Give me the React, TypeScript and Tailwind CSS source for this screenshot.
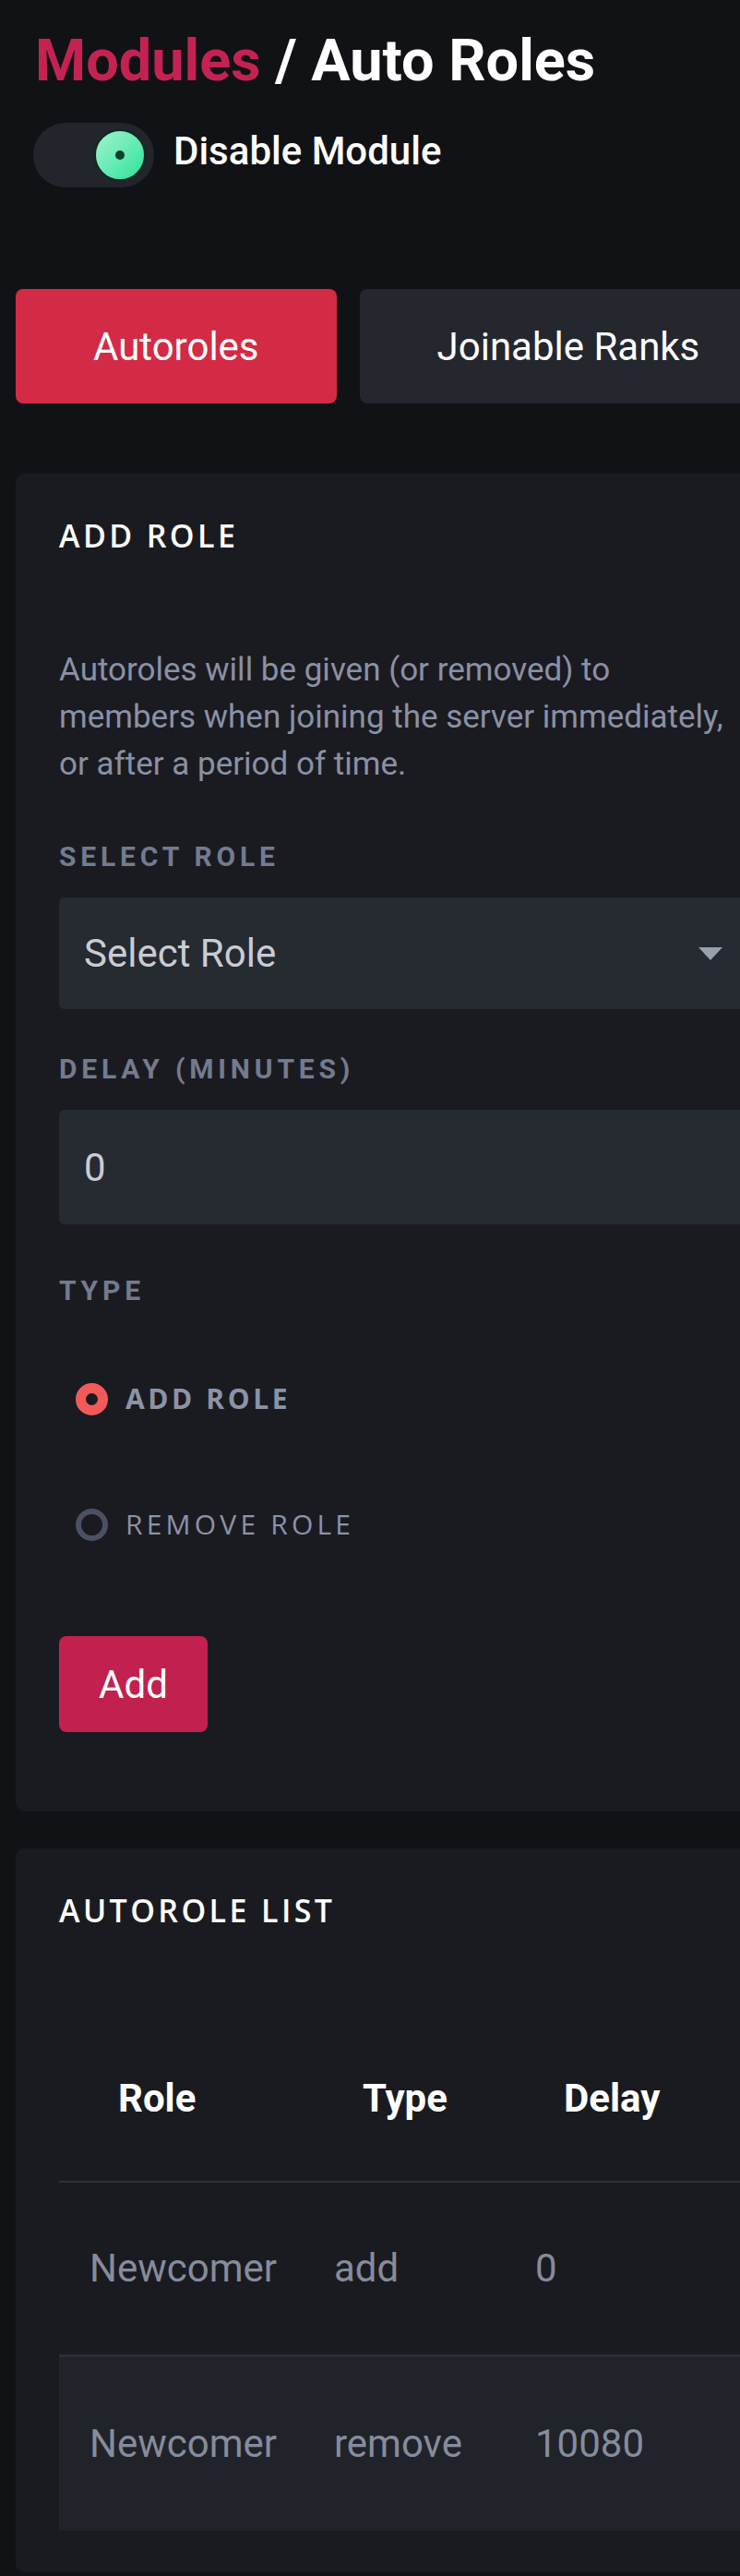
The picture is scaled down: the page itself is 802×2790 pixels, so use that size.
import { useState } from "react"

const rows = [
  { role: "Newcomer", type: "add", delay: "0" },
  { role: "Newcomer", type: "remove", delay: "10080" },
]

const Label = ({ children, className = "" }: { children: React.ReactNode; className?: string }) => (
  <div className={`text-[30px] leading-[42px] font-bold tracking-[0.16em] text-[#737b8f] ${className}`}>{children}</div>
)

const Radio = ({ checked, label, onClick, className = "" }: { checked: boolean; label: string; onClick: () => void; className?: string }) => (
  <button onClick={onClick} className={`flex h-[60px] items-center gap-[19px] pl-[18px] text-left ${className}`}>
    <span
      className={`block h-[35px] w-[35px] shrink-0 rounded-full ${checked ? "border-[11px] border-[#f25a5a]" : "border-[6px] border-[#4a5163]"}`}
    />
    <span className={`font-['Open_Sans',sans-serif] text-[30px] leading-none text-[#8b93a7] ${checked ? "font-bold tracking-[0.12em]" : "font-normal tracking-[0.14em]"}`}>
      {label}
    </span>
  </button>
)

export default function App() {
  const [tab, setTab] = useState("autoroles")
  const [type, setType] = useState("add")

  return (
    <div className="min-h-screen w-full overflow-hidden bg-[#111216] font-['Roboto',sans-serif] text-white">
      <div className="w-[880px] px-[17px]">
        <h1 className="pt-[28px] pl-[21px] text-[63px] leading-[76px] font-bold">
          <span className="text-[#c42352]">Modules</span> / Auto Roles
        </h1>

        <div className="mt-[29px] flex items-center gap-[21px] pl-[19px]">
          <div className="flex h-[70px] w-[131px] items-center justify-end rounded-full bg-[#22252b] pr-[9px]">
            <div className="flex h-[56px] w-[56px] items-center justify-center rounded-full border-2 border-[#0d2a20] bg-[linear-gradient(135deg,#a3f3cf,#2ee39a)]">
              <div className="h-[10px] w-[10px] rounded-full bg-[#10402d]" />
            </div>
          </div>
          <span className="-mt-[8px] text-[42px] leading-none font-medium">Disable Module</span>
        </div>

        <div className="mt-[110px] flex gap-[25px]">
          <button
            onClick={() => setTab("autoroles")}
            className={`h-[124px] shrink-0 rounded-[8px] px-[84px] text-[42px] ${tab === "autoroles" ? "bg-[#d32b45]" : "bg-[#24272e]"}`}
          >
            Autoroles
          </button>
          <button
            onClick={() => setTab("ranks")}
            className={`h-[124px] shrink-0 rounded-[8px] px-[84px] text-[42px] ${tab === "ranks" ? "bg-[#d32b45]" : "bg-[#24272e]"}`}
          >
            Joinable Ranks
          </button>
        </div>

        {/* add role card */}
        <section className="mt-[76px] rounded-[10px] bg-[#1a1b20] px-[47px] pt-[42px] pb-[86px]">
          <h2 className="font-['Open_Sans',sans-serif] text-[34px] leading-[51px] font-semibold tracking-[0.1em]">ADD ROLE</h2>
          <p className="mt-[94px] text-[35px] leading-[51px] text-[#8a91a5]">
            Autoroles will be given (or removed) to members when joining the server immediately, or after a period of time.
          </p>

          <Label className="mt-[54px]">SELECT ROLE</Label>
          <div className="mt-[23px] flex h-[121px] items-center justify-between rounded-[6px] bg-[#262a31] pr-[33px] pl-[27px]">
            <span className="text-[42px] text-[#c9ccd3]">Select Role</span>
            <svg width="26" height="14" viewBox="0 0 26 14">
              <path d="M0 0 H26 L13 14 Z" fill="#9aa0aa" />
            </svg>
          </div>

          <Label className="mt-[44px]">DELAY (MINUTES)</Label>
          <div className="mt-[23px] flex h-[124px] items-center rounded-[6px] bg-[#262a31] pl-[27px]">
            <span className="text-[42px] text-[#c9ccd3]">0</span>
          </div>

          <Label className="mt-[51px]">TYPE</Label>
          <Radio className="mt-[66px]" checked={type === "add"} label="ADD ROLE" onClick={() => setType("add")} />
          <Radio className="mt-[76px]" checked={type === "remove"} label="REMOVE ROLE" onClick={() => setType("remove")} />

          <button className="mt-[91px] h-[104px] w-[161px] rounded-[8px] bg-[#c2214f] text-[42px]">Add</button>
        </section>

        {/* list card */}
        <section className="mt-[40px] rounded-[10px] bg-[#1a1b20] px-[47px] pt-[42px] pb-[45px]">
          <h2 className="font-['Open_Sans',sans-serif] text-[34px] leading-[51px] font-semibold tracking-[0.1em]">AUTOROLE LIST</h2>
          <table className="mt-[88px] w-full table-fixed border-collapse text-left">
            <colgroup>
              <col className="w-[265px]" />
              <col className="w-[218px]" />
              <col />
            </colgroup>
            <thead>
              <tr className="h-[180px] border-b-2 border-[#2d3238]">
                <th className="pl-[64px] text-[42px] font-bold">Role</th>
                <th className="pl-[64px] text-[42px] font-bold">Type</th>
                <th className="pl-[64px] text-[42px] font-bold">Delay</th>
              </tr>
            </thead>
            <tbody>
              {rows.map((r, i) => (
                <tr key={i} className={i % 2 ? "h-[190px] border-t-[3px] border-[#2a2e36] bg-[#20232a]" : "h-[188px]"}>
                  <td className="pl-[33px] text-[42px] text-[#868c9b]">{r.role}</td>
                  <td className="pl-[33px] text-[42px] text-[#868c9b]">{r.type}</td>
                  <td className="pl-[33px] text-[42px] text-[#868c9b]">{r.delay}</td>
                </tr>
              ))}
            </tbody>
          </table>
        </section>
      </div>
    </div>
  )
}
